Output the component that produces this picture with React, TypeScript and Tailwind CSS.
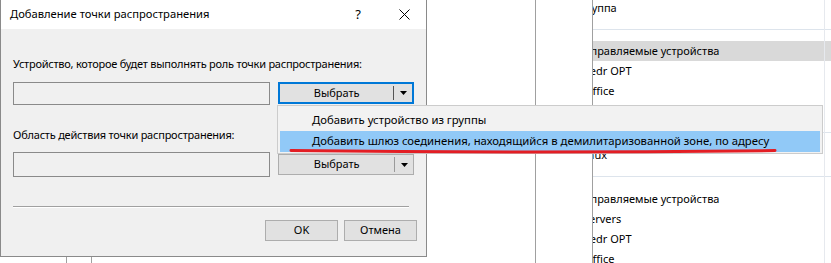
import React from "react";

const font = "font-['Noto_Sans',sans-serif]";

const TreeRow = ({ text, shift, active }: { text: string; shift: string; active?: boolean }) => (
  <div className={`h-[20px] flex items-center whitespace-nowrap text-[11px] text-black ${active ? "bg-[#d9d9d9]" : ""}`}>
    <span className={shift}>{text}</span>
  </div>
);

const Background = () => (
  <div className="flex h-full">
    <div className="w-[67px] border-r border-[#a0a0a0]" />
    <div className="w-[25px] border-r border-[#a0a0a0]" />
    <div className="w-[444px] border-r border-[#a0a0a0]" />
    <div className="w-[57px] border-r border-[#a0a0a0]" />
    <div className="relative flex-1 overflow-hidden">
      <div className="flex flex-col mt-[-2px]">
        <TreeRow text="Группа" shift="ml-[-13px]" />
        <div className="h-[11px]" />
        <div className="h-px bg-[#dde4ec]" />
        <div className="h-[11px]" />
        <TreeRow text="Неуправляемые устройства" shift="ml-[-22px]" active />
        <TreeRow text="Kedr OPT" shift="ml-[-10px]" />
        <TreeRow text="Office" shift="ml-[-9px]" />
        <div className="h-[31px]" />
        <div className="h-px bg-[#dde4ec]" />
        <div className="h-[12px]" />
        <TreeRow text="Linux" shift="ml-[-14px]" />
        <div className="h-[11px]" />
        <div className="h-px bg-[#dde4ec]" />
        <div className="h-[12px]" />
        <TreeRow text="Неуправляемые устройства" shift="ml-[-22px]" />
        <TreeRow text="Servers" shift="ml-[-10px]" />
        <TreeRow text="Kedr OPT" shift="ml-[-10px]" />
        <TreeRow text="Office" shift="ml-[-9px]" />
      </div>
      <div className="absolute left-[231px] top-0 h-full w-px bg-[#e6e9ee]" />
    </div>
  </div>
);

const SplitButton = ({ focused }: { focused?: boolean }) => (
  <div
    className={`w-[136px] flex items-stretch bg-[#e1e1e1] ${
      focused ? "h-[22px] border-2 border-[#0078d7]" : "h-[21px] border border-[#adadad]"
    }`}
  >
    <div className="flex-1 flex items-center justify-center text-[11px] text-black">Выбрать</div>
    <div className={`w-px my-[2px] ${focused ? "bg-[#555]" : "bg-[#9a9a9a]"}`} />
    <div className="w-[18px] flex items-center justify-center">
      <svg width="7" height="4" viewBox="0 0 7 4">
        <path d="M0 0h7L3.5 4z" fill="#000" />
      </svg>
    </div>
  </div>
);

const Dialog = () => (
  <div className="absolute left-0 top-0 w-[427px] h-[257px] border-l border-r border-b border-[#8a8a8a] bg-[#f0f0f0] flex flex-col">
    <div className="h-[29px] bg-white flex items-center pl-[9px] pr-[16px] text-[11.2px] text-black">
      <span className="flex-1">Добавление точки распространения</span>
      <span className="mr-[38px] text-[13px]">?</span>
      <svg width="11" height="11" viewBox="0 0 11 11">
        <path d="M0.5 0.5l10 10M10.5 0.5l-10 10" stroke="#000" strokeWidth="1" />
      </svg>
    </div>
    <div className="flex flex-col px-[12px] pt-[27px]">
      <div className="text-[11px] leading-[16px] tracking-[-0.24px] text-black">
        Устройство, которое будет выполнять роль точки распространения:
      </div>
      <div className="flex gap-[8px] mt-[10px]">
        <div className="w-[258px] h-[23px] border border-[#8a8a8a] bg-[#f0f0f0]" />
        <SplitButton focused />
      </div>
      <div className="text-[11px] leading-[16px] tracking-[-0.22px] text-black mt-[22px]">
        Область действия точки распространения:
      </div>
      <div className="flex gap-[8px] mt-[9px] items-center">
        <div className="w-[258px] h-[25px] border border-[#8a8a8a] bg-[#f0f0f0]" />
        <SplitButton />
      </div>
      <div className="mt-[29px] mr-[5px] h-[2px] border-t border-[#a0a0a0] border-b border-b-white" />
      <div className="flex justify-end gap-[6px] mt-[12px] mr-[-3px]">
        <div className="w-[73px] h-[21px] border border-[#adadad] bg-[#e1e1e1] flex items-center justify-center text-[11px] text-black">
          OK
        </div>
        <div className="w-[73px] h-[21px] border border-[#adadad] bg-[#e1e1e1] flex items-center justify-center text-[11px] text-black">
          Отмена
        </div>
      </div>
    </div>
  </div>
);

const Menu = () => (
  <div className="absolute left-[277px] top-[105px] w-[546px] h-[49px] border border-[#cccccc] bg-[#f2f2f2] pt-[3px] px-[2px] flex flex-col text-[11.3px] text-black">
    <div className="h-[22px] flex items-center pl-[32px]">Добавить устройство из группы</div>
    <div className="h-[21px] flex items-center pl-[32px] bg-[#91c9f7]">
      Добавить шлюз соединения, находящийся в демилитаризованной зоне, по адресу
    </div>
  </div>
);

export default function App() {
  return (
    <div className={`relative w-[831px] h-[263px] bg-white overflow-hidden ${font}`}>
      <Background />
      <Dialog />
      <Menu />
      <svg className="absolute left-0 top-0" width="831" height="263" viewBox="0 0 831 263">
        <path d="M291 150.5Q530 153.5 775 150.5" stroke="#e31e24" strokeWidth="3" fill="none" strokeLinecap="round" />
      </svg>
    </div>
  );
}
